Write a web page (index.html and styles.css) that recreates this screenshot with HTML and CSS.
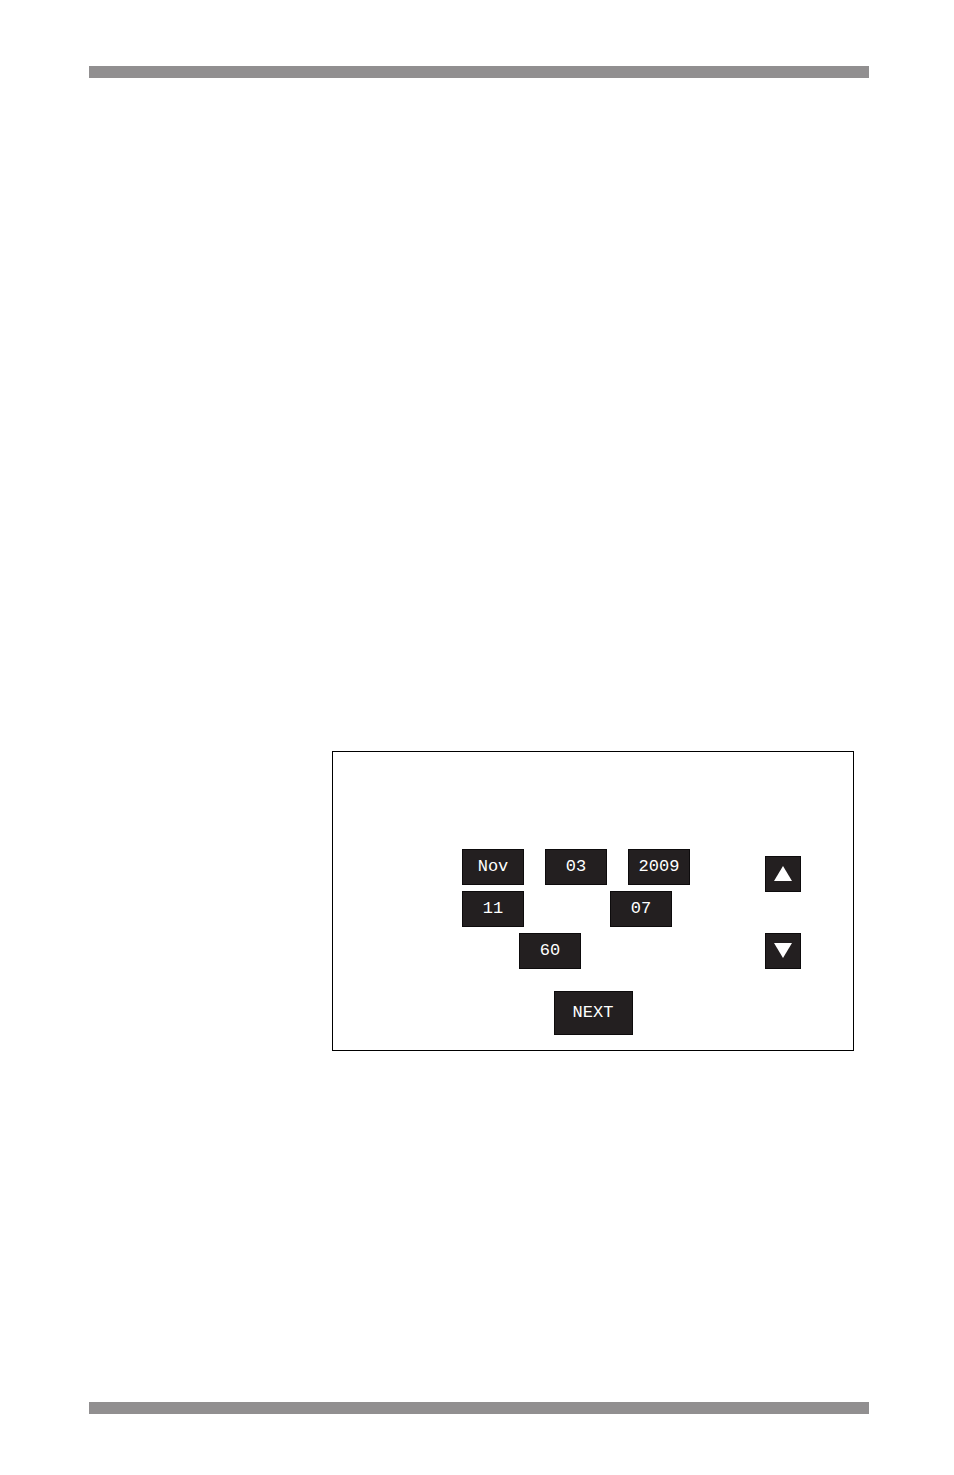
FILE: index.html
```html
<!DOCTYPE html>
<html lang="en">
<head>
<meta charset="utf-8">
<meta name="viewport" content="width=device-width, initial-scale=1">
<title>Date and time setup</title>
<link rel="stylesheet" href="styles.css">
</head>
<body>
<div class="page">
  <header class="rule"></header>
  <main class="content">
    <section class="panel" aria-label="Date and time">
      <div class="settings">
        <div class="fields">
          <div class="row row-date">
            <button class="key" type="button" aria-label="Month">Nov</button>
            <button class="key" type="button" aria-label="Day">03</button>
            <button class="key" type="button" aria-label="Year">2009</button>
          </div>
          <div class="row row-time">
            <button class="key" type="button" aria-label="Hour">11</button>
            <button class="key" type="button" aria-label="Minute">07</button>
          </div>
          <div class="row row-rate">
            <button class="key" type="button" aria-label="Frequency">60</button>
          </div>
        </div>
        <div class="arrows">
          <button class="key arrow" type="button" aria-label="Increase">
            <svg viewBox="0 0 18 16" aria-hidden="true"><path d="M9 0 18 15H0Z"/></svg>
          </button>
          <button class="key arrow" type="button" aria-label="Decrease">
            <svg viewBox="0 0 18 16" aria-hidden="true"><path d="M0 0H18L9 15Z"/></svg>
          </button>
        </div>
      </div>
      <button class="key next" type="button">NEXT</button>
    </section>
  </main>
  <footer class="rule"></footer>
</div>
</body>
</html>
```
FILE: styles.css
```css
* {
  box-sizing: border-box;
}

body {
  margin: 0;
  background: #fff;
}

.page {
  display: flex;
  flex-direction: column;
  min-height: 100vh;
  padding: 66px 85px 61px 89px;
}

.rule {
  height: 12px;
  background: #918f90;
}

.content {
  flex: 1;
  padding: 673px 15px 0 243px;
}

.panel {
  display: flex;
  flex-direction: column;
  align-items: center;
  gap: 22px;
  padding: 97px 52px 15px 129px;
  border: 1px solid #000;
}

.settings {
  display: flex;
  justify-content: space-between;
  align-self: stretch;
}

.fields {
  display: flex;
  flex-direction: column;
  gap: 6px;
}

.row {
  display: flex;
}

.row-date {
  gap: 21px;
}

.row-time {
  gap: 86px;
}

.row-rate {
  padding-left: 57px;
}

.key {
  display: flex;
  align-items: center;
  justify-content: center;
  width: 62px;
  height: 36px;
  padding: 0;
  border: 1px solid #0d0b0c;
  border-radius: 0;
  background: #231f20;
  color: #fff;
  font: 17px/20px "Courier New", "Liberation Mono", monospace;
  cursor: pointer;
}

.arrows {
  display: flex;
  flex-direction: column;
  justify-content: space-between;
  padding-top: 7px;
}

.arrow {
  width: 36px;
}

.arrow svg {
  width: 18px;
  height: 16px;
  fill: #fff;
}

.next {
  width: 79px;
  height: 44px;
  margin-right: 77px;
}
```
